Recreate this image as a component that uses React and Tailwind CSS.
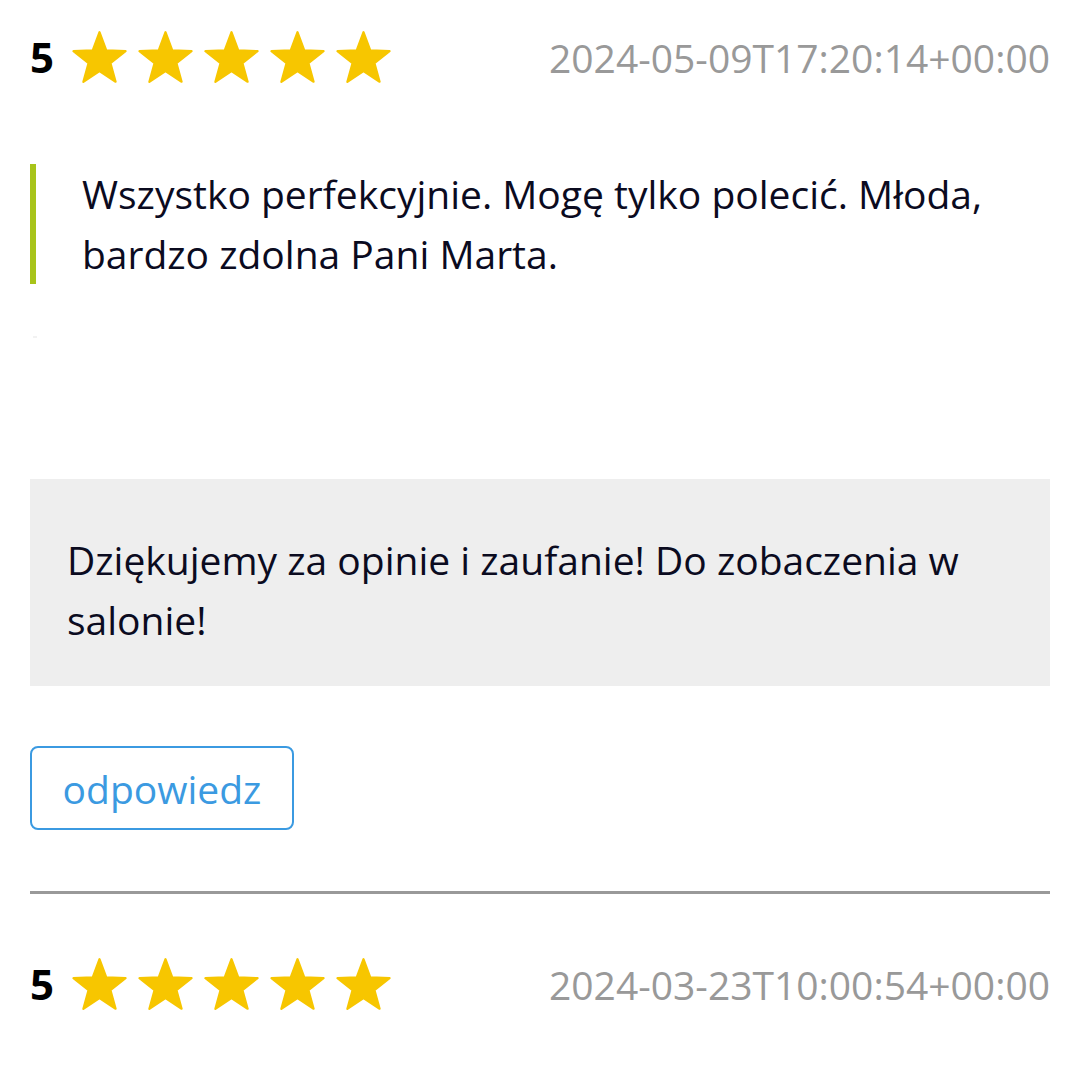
const Star = () => (
  <svg viewBox="-104 -104 208 189" className="w-[57px] h-[54px]">
    <path
      d="M0 -100 L24.7 -34 L95.1 -30.9 L39.9 13 L58.8 80.9 L0 42 L-58.8 80.9 L-39.9 13 L-95.1 -30.9 L-24.7 -34 Z"
      fill="#f7c600"
      stroke="#f7c600"
      strokeWidth="8"
      strokeLinejoin="round"
    />
  </svg>
);

const ReviewHeader = ({ rating, date }) => (
  <div className="flex items-center justify-between h-[54px]">
    <div className="flex items-center gap-[9px]">
      <span className="text-[42px] font-bold text-black mr-[8px] leading-none">{rating}</span>
      <Star />
      <Star />
      <Star />
      <Star />
      <Star />
    </div>
    <span className="text-[39px] text-[#999999] leading-none">{date}</span>
  </div>
);

export default function App() {
  return (
    <div className="w-[1080px] h-[1080px] overflow-hidden bg-white px-[30px] pt-[30px] font-['Open_Sans',sans-serif] text-[#0b0b1f]">
      {/* review */}
      <ReviewHeader rating="5" date="2024-05-09T17:20:14+00:00" />

      <blockquote className="mt-[80px] border-l-[6px] border-[#a8c41a] pl-[46px] text-[39px] leading-[60px]">
        Wszystko perfekcyjnie. Mogę tylko polecić. Młoda, bardzo zdolna Pani Marta.
      </blockquote>

      <div className="mt-[52px] ml-[3px] w-[4px] h-[2px] bg-[#f2f2f2]" />

      {/* odpowiedź salonu */}
      <div className="mt-[141px] bg-[#eeeeee] pt-[51px] pb-[36px] px-[37px] text-[39px] leading-[60px]">
        Dziękujemy za opinie i zaufanie! Do zobaczenia w salonie!
      </div>

      <button className="mt-[60px] w-[264px] h-[84px] border-2 border-[#3b9ae1] rounded-[8px] text-[39px] text-[#3b9ae1] leading-none">
        odpowiedz
      </button>

      <div className="mt-[61px] h-[3px] bg-[#999999]" />

      <div className="mt-[63px]">
        <ReviewHeader rating="5" date="2024-03-23T10:00:54+00:00" />
      </div>
    </div>
  );
}
